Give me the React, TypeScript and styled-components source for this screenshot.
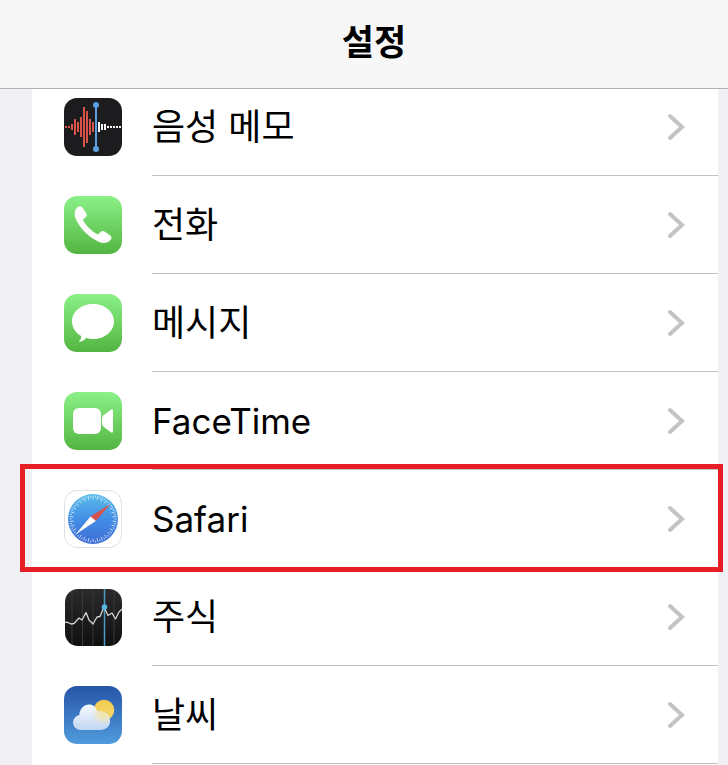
import React from "react";
import styled, { createGlobalStyle } from "styled-components";

const GlobalStyle = createGlobalStyle`
  * { box-sizing: border-box; }
  body {
    margin: 0;
    background: #f0f0f5;
    color: #000;
    font-family: Inter, "Noto Sans CJK KR", sans-serif;
  }
`;

const Page = styled.div`
  display: flex;
  flex-direction: column;
  min-height: 100vh;
`;

const Header = styled.header`
  position: sticky;
  top: 0;
  z-index: 2;
  display: flex;
  align-items: center;
  justify-content: center;
  height: 89px;
  padding: 0 0 8px 20px;
  background: #f7f7f7;
  border-bottom: 1px solid #b2b2b2;
`;

const Title = styled.h1`
  margin: 0;
  font-size: 35px;
  line-height: 48px;
  font-weight: 600;
  font-family: "Noto Sans CJK KR", sans-serif;
`;

/* The list is scrolled a little way under the header. */
const List = styled.ul`
  flex: 1;
  margin: -11px 10px 0 32px;
  padding: 0;
  list-style: none;
  background: #fff;
`;

const Item = styled.li`
  position: relative;
`;

const RowLink = styled.a`
  display: flex;
  align-items: center;
  gap: 30px;
  height: 98px;
  padding-left: 32px;
  color: inherit;
  text-decoration: none;
`;

const AppIcon = styled.svg`
  flex: none;
  width: 58px;
  height: 58px;
`;

const RowBody = styled.span`
  flex: 1;
  display: flex;
  align-items: center;
  justify-content: space-between;
  height: 98px;
  padding-right: 32px;
  border-bottom: 1px solid #c2c2c4;
`;

const Label = styled.span<{ $latin?: boolean }>`
  font-size: ${(p) => (p.$latin ? 35 : 36)}px;
  line-height: 48px;
`;

const Chevron = styled.svg`
  flex: none;
  width: 20px;
  height: 30px;
`;

const Highlight = styled.span`
  position: absolute;
  inset: -6px -5px -4px -12px;
  z-index: 1;
  border: 5px solid #e61e25;
  pointer-events: none;
`;

const GreenTile = ({ id }: { id: string }) => (
  <>
    <defs>
      <linearGradient id={id} x1="0" y1="0" x2="0" y2="1">
        <stop offset="0" stopColor="#8bf188" />
        <stop offset="1" stopColor="#53b541" />
      </linearGradient>
    </defs>
    <rect width="58" height="58" rx="13" fill={`url(#${id})`} />
  </>
);

const wave: [number, number][] = [
  [2, 1], [5, 1], [8, 3], [11, 8], [14, 5], [17, 10], [20, 20], [23, 16], [26, 8], [29, 5],
];
const quiet: [number, number][] = [
  [35, 5], [38, 3], [41, 3], [44, 1], [47, 1], [50, 1], [53, 1], [56, 1],
];

const VoiceMemosIcon = () => (
  <AppIcon viewBox="0 0 58 58" aria-hidden="true">
    <rect width="58" height="58" rx="13" fill="#1c1c1e" />
    {wave.map(([x, h]) => (
      <rect key={x} x={x - 1} y={29 - h} width="2" height={h * 2} fill="#d9534b" />
    ))}
    {quiet.map(([x, h]) => (
      <rect key={x} x={x - 1} y={29 - h} width="2" height={h * 2} fill="#f5f5f5" />
    ))}
    <path d="M32 7V51" stroke="#5a9fe0" strokeWidth="2" />
    <circle cx="32" cy="7" r="3" fill="#5a9fe0" />
    <circle cx="32" cy="51" r="3" fill="#5a9fe0" />
  </AppIcon>
);

const PhoneIcon = () => (
  <AppIcon viewBox="0 0 58 58" aria-hidden="true">
    <GreenTile id="phone-bg" />
    <path
      fill="#fff"
      d="M13.5 11.2C14.8 10 17 9.7 18.3 11.3L22.2 17.2C23.2 18.8 22.8 20.2 21.5 21.3L19.8 22.8C19 23.5 19 24.3 19.7 25.5C22.5 30 27.5 34.8 32.3 37.8C33.4 38.4 34.2 38.4 34.9 37.6L36.5 35.9C37.6 34.8 39 34.6 40.5 35.5L46 39.3C47.8 40.6 48 42.5 46.7 43.8C43.5 47.3 39.8 47.9 35.2 45.9C25.9 42 16.6 33.2 12.4 24.2C9.8 18.7 10.2 14.4 13.5 11.2Z"
    />
  </AppIcon>
);

const MessagesIcon = () => (
  <AppIcon viewBox="0 0 58 58" aria-hidden="true">
    <GreenTile id="messages-bg" />
    <path
      fill="#fff"
      d="M29 10C40.600 10 50 17.500 50 27.500C50 37.300 40.600 45 29 45C26.600 45 24.400 44.700 22.300 44.100C20.200 46.400 17.600 47.700 15.300 47.800C14.900 47.800 14.800 47.400 15.200 47.100C16.800 45.600 17.400 44 17.100 41.900C11.600 38.800 8 33.500 8 27.500C8 17.500 17.400 10 29 10Z"
    />
  </AppIcon>
);

const FaceTimeIcon = () => (
  <AppIcon viewBox="0 0 58 58" aria-hidden="true">
    <GreenTile id="facetime-bg" />
    <rect x="9" y="16" width="28" height="26" rx="6" fill="#fff" />
    <path
      fill="#fff"
      d="M38 26.500Q38 24.500 39.500 23.300L46.500 17.900Q49 16.400 49 19V39Q49 41.600 46.500 40.100L39.500 34.700Q38 33.500 38 31.500Z"
    />
  </AppIcon>
);

const ticks = Array.from({ length: 60 }, (_, i) => i * 6);

const SafariIcon = () => (
  <AppIcon viewBox="0 0 58 58" aria-hidden="true">
    <defs>
      <linearGradient id="safari-dial" x1="0" y1="0" x2="0" y2="1">
        <stop offset="0" stopColor="#5abdea" />
        <stop offset="0.5" stopColor="#438ee6" />
        <stop offset="1" stopColor="#3c6bd4" />
      </linearGradient>
    </defs>
    <rect x="0.5" y="0.5" width="57" height="57" rx="12.500" fill="#fff" stroke="#dfdfe2" />
    <circle cx="29" cy="29" r="25" fill="url(#safari-dial)" />
    {ticks.map((angle, i) => (
      <path
        key={angle}
        d={i % 2 ? "M29 5.500V7.500" : "M29 5.500V9.500"}
        stroke="#fff"
        strokeWidth="0.8"
        strokeOpacity="0.8"
        transform={`rotate(${angle} 29 29)`}
      />
    ))}
    <path d="M46.500 14L31.800 31L26.500 26.500Z" fill="#d7524c" />
    <path d="M11.500 44.500L26.500 26.500L31.800 31Z" fill="#fff" />
  </AppIcon>
);

const StocksIcon = () => (
  <AppIcon viewBox="0 0 58 58" aria-hidden="true">
    <defs>
      <linearGradient id="stocks-bg" x1="0" y1="0" x2="0" y2="1">
        <stop offset="0" stopColor="#2b2b2d" />
        <stop offset="1" stopColor="#101011" />
      </linearGradient>
      <clipPath id="stocks-clip">
        <rect x="1" y="1" width="57" height="57" rx="13" />
      </clipPath>
    </defs>
    <g clipPath="url(#stocks-clip)">
      <rect width="58" height="58" fill="url(#stocks-bg)" />
      <path d="M8 0V58M18.500 0V58M29 0V58M50 0V58" stroke="#39393b" strokeWidth="1" />
      <path d="M40.500 0V58" stroke="#4a9cc4" strokeWidth="1.500" />
      <path
        d="M0 34L4 34.500L7 36L10 35.500L15 30L18 32L22 24.500L25 32L29 36L33 29L36 28.500L40 19L44 27.500L48 25L51.500 31L55 24L58 21"
        fill="none"
        stroke="#d4d4d6"
        strokeWidth="1.300"
        strokeLinejoin="round"
      />
      <circle cx="40.500" cy="19" r="2.800" fill="#59b3df" />
    </g>
  </AppIcon>
);

const WeatherIcon = () => (
  <AppIcon viewBox="0 0 58 58" aria-hidden="true">
    <defs>
      <linearGradient id="weather-sky" x1="0" y1="0" x2="0" y2="1">
        <stop offset="0" stopColor="#2755a8" />
        <stop offset="1" stopColor="#509bdc" />
      </linearGradient>
      <linearGradient id="weather-cloud" x1="0" y1="0" x2="0" y2="1">
        <stop offset="0" stopColor="#f9fbfe" />
        <stop offset="1" stopColor="#bed5f2" />
      </linearGradient>
      <linearGradient id="weather-sun" x1="0" y1="0" x2="0" y2="1">
        <stop offset="0" stopColor="#f1cc4c" />
        <stop offset="1" stopColor="#f4d978" />
      </linearGradient>
      <radialGradient id="weather-glow" gradientUnits="userSpaceOnUse" cx="39" cy="28" r="11">
        <stop offset="0" stopColor="#f4e2a0" />
        <stop offset="1" stopColor="#f4e2a0" stopOpacity="0" />
      </radialGradient>
      <clipPath id="weather-cloud-shape">
        <path d="M16.500 44A7.500 7.500 0 0 1 15.300 29.100C15.600 22.700 20 18.500 25 18.500C29 18.500 32 20.800 33.300 25.500C40 24.300 46 28.500 46 35C46 40.500 42 44 36.500 44Z" />
      </clipPath>
    </defs>
    <rect width="58" height="58" rx="13" fill="url(#weather-sky)" />
    <circle cx="40" cy="24" r="10.300" fill="url(#weather-sun)" />
    <g clipPath="url(#weather-cloud-shape)">
      <rect x="8" y="18" width="39" height="27" fill="url(#weather-cloud)" />
      <rect x="8" y="18" width="39" height="27" fill="url(#weather-glow)" />
    </g>
  </AppIcon>
);

type Entry = {
  id: string;
  name: string;
  Icon: React.ComponentType;
  latin?: boolean;
  highlighted?: boolean;
};

const entries: Entry[] = [
  { id: "voice-memos", name: "음성 메모", Icon: VoiceMemosIcon },
  { id: "phone", name: "전화", Icon: PhoneIcon },
  { id: "messages", name: "메시지", Icon: MessagesIcon },
  { id: "facetime", name: "FaceTime", Icon: FaceTimeIcon, latin: true },
  { id: "safari", name: "Safari", Icon: SafariIcon, latin: true, highlighted: true },
  { id: "stocks", name: "주식", Icon: StocksIcon },
  { id: "weather", name: "날씨", Icon: WeatherIcon },
];

export default function App() {
  return (
    <Page lang="ko">
      <GlobalStyle />
      <Header>
        <Title>설정</Title>
      </Header>
      <List>
        {entries.map(({ id, name, Icon, latin, highlighted }) => (
          <Item key={id}>
            <RowLink href={`#${id}`}>
              <Icon />
              <RowBody>
                <Label $latin={latin}>{name}</Label>
                <Chevron viewBox="0 0 20 30" aria-hidden="true">
                  <path
                    d="M4 4L16 15L4 26"
                    fill="none"
                    stroke="#c4c4c6"
                    strokeWidth="4"
                    strokeLinecap="round"
                    strokeLinejoin="miter"
                  />
                </Chevron>
              </RowBody>
            </RowLink>
            {highlighted && <Highlight />}
          </Item>
        ))}
      </List>
    </Page>
  );
}
